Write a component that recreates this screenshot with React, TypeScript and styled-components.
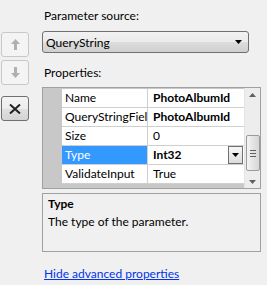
import React from "react";
import styled, { createGlobalStyle } from "styled-components";

const Global = createGlobalStyle`
  html, body { margin: 0; padding: 0; background: #f0f0f0; }
  body { font-family: "Segoe UI", Lato, "Liberation Sans", sans-serif; font-size: 12px; color: #000; }
  * { box-sizing: border-box; }
`;

const Page = styled.div`
  width: 267px;
  height: 285px;
  display: flex;
  background: #f0f0f0;
`;

const SideBar = styled.div`
  width: 42px;
  padding: 32px 0 0 1px;
  display: flex;
  flex-direction: column;
`;

const SideButton = styled.div<{ $enabled?: boolean; $gap: number }>`
  width: 28px;
  height: 25px;
  margin-top: ${(p) => p.$gap}px;
  border: 1px solid ${(p) => (p.$enabled ? "#707070" : "#c8c8c8")};
  border-radius: 3px;
  background: ${(p) =>
    p.$enabled
      ? "linear-gradient(#f4f4f4 0%, #ededed 50%, #e0e0e0 51%, #d4d4d4 100%)"
      : "#f4f4f4"};
  display: flex;
  align-items: center;
  justify-content: center;
`;

const Main = styled.div`
  width: 219px;
  display: flex;
  flex-direction: column;
`;

const Label = styled.div<{ $top: number }>`
  margin-top: ${(p) => p.$top}px;
  padding-left: 2px;
  height: 15px;
  line-height: 15px;
`;

const Combo = styled.div`
  margin-top: 8px;
  width: 207px;
  height: 22px;
  border: 1px solid #707070;
  border-radius: 3px;
  background: linear-gradient(#f2f2f2 0%, #ebebeb 50%, #dddddd 51%, #cfcfcf 100%);
  display: flex;
  align-items: center;
  justify-content: space-between;
  padding: 0 6px 0 3px;
`;

const Grid = styled.div`
  margin-top: 7px;
  height: 102px;
  border: 1px solid #a0a0a0;
  display: flex;
  background: #c8c8c8;
`;

const Gutter = styled.div`
  width: 19px;
  background: #c8c8c8;
`;

const Rows = styled.div`
  flex: 1;
  padding-top: 1px;
  display: flex;
  flex-direction: column;
`;

const Row = styled.div`
  display: flex;
  height: 19px;
  border-bottom: 1px solid #cfcfcf;
  background: #fff;
`;

const NameCell = styled.div<{ $selected?: boolean }>`
  width: 86px;
  padding-left: 3px;
  line-height: 18px;
  white-space: nowrap;
  overflow: hidden;
  border-right: 1px solid #cfcfcf;
  background: ${(p) => (p.$selected ? "#3399ff" : "#fff")};
  color: ${(p) => (p.$selected ? "#fff" : "#000")};
`;

const ValueCell = styled.div<{ $bold?: boolean }>`
  flex: 1;
  padding-left: 5px;
  line-height: 18px;
  font-weight: ${(p) => (p.$bold ? 700 : 400)};
  display: flex;
  align-items: center;
  justify-content: space-between;
  white-space: nowrap;
`;

const CellDrop = styled.div`
  width: 15px;
  height: 18px;
  margin-right: 1px;
  border: 1px solid #707070;
  background: linear-gradient(#f6f6f6, #dcdcdc);
  display: flex;
  align-items: center;
  justify-content: center;
`;

const Scroll = styled.div`
  width: 16px;
  background: #ededed;
  border-left: 1px solid #e4e4e4;
  display: flex;
  flex-direction: column;
  align-items: center;
  justify-content: space-between;
  padding: 5px 0 4px 0;
  position: relative;
`;

const Thumb = styled.div`
  position: absolute;
  left: 1px;
  top: 47px;
  width: 14px;
  height: 36px;
  border: 1px solid #9b9b9b;
  border-radius: 2px;
  background: linear-gradient(90deg, #f4f4f4, #e4e4e4 50%, #d6d6d6);
  display: flex;
  flex-direction: column;
  align-items: center;
  justify-content: center;
  gap: 2px;
`;

const Grip = styled.div`
  width: 6px;
  height: 1px;
  background: #606060;
`;

const Desc = styled.div`
  margin-top: 4px;
  height: 59px;
  border: 1px solid #a0a0a0;
  padding: 1px 0 0 5px;
  line-height: 18px;
`;

const DescTitle = styled.div`
  font-weight: 700;
`;

const Link = styled.a`
  margin-top: 14px;
  padding-left: 2px;
  color: #0033ee;
  text-decoration: underline;
  line-height: 15px;
`;

const Arrow = ({ up, color }: { up?: boolean; color: string }) => (
  <svg width="9" height="11" viewBox="0 0 9 11">
    {up ? (
      <path d="M4.5 0 L9 5 L6 5 L6 11 L3 11 L3 5 L0 5 Z" fill={color} />
    ) : (
      <path d="M4.5 11 L9 6 L6 6 L6 0 L3 0 L3 6 L0 6 Z" fill={color} />
    )}
  </svg>
);

const Tri = ({ up, color = "#000" }: { up?: boolean; color?: string }) => (
  <svg width="7" height="4" viewBox="0 0 7 4">
    {up ? <path d="M0 4 L7 4 L3.5 0 Z" fill={color} /> : <path d="M0 0 L7 0 L3.5 4 Z" fill={color} />}
  </svg>
);

const rows = [
  { name: "Name", value: "PhotoAlbumId", bold: true },
  { name: "QueryStringField", value: "PhotoAlbumId", bold: true },
  { name: "Size", value: "0" },
  { name: "Type", value: "Int32", bold: true, selected: true },
  { name: "ValidateInput", value: "True" },
];

export default function App() {
  return (
    <Page>
      <Global />
      <SideBar>
        <SideButton $gap={0}>
          <Arrow up color="#b0b0b0" />
        </SideButton>
        <SideButton $gap={3}>
          <Arrow color="#b0b0b0" />
        </SideButton>
        <SideButton $gap={11} $enabled>
          <svg width="12" height="10" viewBox="0 0 12 10">
            <path d="M1 0.5 L11 9.5 M11 0.5 L1 9.5" stroke="#222" strokeWidth="2" />
          </svg>
        </SideButton>
      </SideBar>
      <Main>
        <Label $top={8}>Parameter source:</Label>
        <Combo>
          <span>QueryString</span>
          <Tri />
        </Combo>
        <Label $top={12}>Properties:</Label>
        <Grid>
          <Gutter />
          <Rows>
            {rows.map((r) => (
              <Row key={r.name}>
                <NameCell $selected={r.selected}>{r.name}</NameCell>
                <ValueCell $bold={r.bold}>
                  <span>{r.value}</span>
                  {r.selected && (
                    <CellDrop>
                      <Tri />
                    </CellDrop>
                  )}
                </ValueCell>
              </Row>
            ))}
          </Rows>
          <Scroll>
            <Tri up color="#606060" />
            <Thumb>
              <Grip />
              <Grip />
              <Grip />
            </Thumb>
            <Tri color="#606060" />
          </Scroll>
        </Grid>
        <Desc>
          <DescTitle>Type</DescTitle>
          <div>The type of the parameter.</div>
        </Desc>
        <Link href="#">Hide advanced properties</Link>
      </Main>
    </Page>
  );
}
